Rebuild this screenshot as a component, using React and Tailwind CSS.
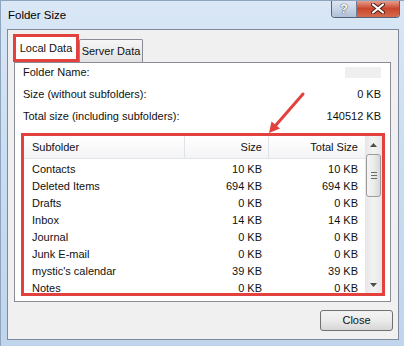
import React from "react";

const rows = [
  ["Contacts", "10 KB", "10 KB"],
  ["Deleted Items", "694 KB", "694 KB"],
  ["Drafts", "0 KB", "0 KB"],
  ["Inbox", "14 KB", "14 KB"],
  ["Journal", "0 KB", "0 KB"],
  ["Junk E-mail", "0 KB", "0 KB"],
  ["mystic's calendar", "39 KB", "39 KB"],
  ["Notes", "0 KB", "0 KB"],
];

function Triangle({ down }) {
  return (
    <svg width="7" height="4" viewBox="0 0 7 4">
      {down ? (
        <path d="M0 0 L7 0 L3.5 4 Z" fill="#4d4d4d" />
      ) : (
        <path d="M0 4 L7 4 L3.5 0 Z" fill="#4d4d4d" />
      )}
    </svg>
  );
}

function TitleButtons() {
  return (
    <div className="flex h-[18px] mr-[4px] -mt-[1px] rounded-b-[4px] border border-t-0 border-[#52637a] overflow-hidden">
      <div className="w-[25px] flex items-center justify-center bg-gradient-to-b from-[#dfe7f1] via-[#c9d6e7] to-[#aebfd5] border-r border-[#6e7f96]">
        <span className="text-white font-bold text-[13px] leading-none [text-shadow:0_0_1px_#2c3a4c,0_0_1px_#2c3a4c]">?</span>
      </div>
      <div className="w-[42px] flex items-center justify-center bg-gradient-to-b from-[#e9a899] via-[#c9462d] to-[#d56a4c]">
        <svg width="14" height="11" viewBox="0 0 14 11">
          <path d="M2 1.5 L12 9.5 M12 1.5 L2 9.5" stroke="#4a1f17" strokeWidth="4" strokeLinecap="round" />
          <path d="M2 1.5 L12 9.5 M12 1.5 L2 9.5" stroke="#ffffff" strokeWidth="2.2" strokeLinecap="round" />
        </svg>
      </div>
    </div>
  );
}

export default function App() {
  return (
    <div className="relative w-[404px] h-[346px] overflow-hidden bg-gradient-to-b from-[#d9e7f6] via-[#c9dcf0] to-[#c0d5ec] border-t border-l border-[#8fa4bd] font-['Liberation_Sans',Arial,sans-serif] text-[11px] text-[#111]">
      <div className="flex h-[28px] items-start justify-between">
        <div className="pl-[7px] pt-[5px] text-[11.5px] leading-[18px] text-black">Folder Size</div>
        <TitleButtons />
      </div>

      <div className="ml-[6px] w-[392px] h-[311px] border border-[#7d8a9b] bg-[#f0f0f0] flex flex-col">
        <div className="flex items-end ml-[5px] mt-[4px] h-[28px]">
          <div className="w-[66px] h-[28px] border-[3px] border-[#e2413e] bg-white flex items-center justify-center whitespace-nowrap">
            Local Data
          </div>
          <div className="w-[64px] h-[23px] border border-b-0 border-[#898c95] rounded-t-[2px] bg-gradient-to-b from-[#f6f6f6] to-[#e2e2e2] flex items-center justify-center whitespace-nowrap">
            Server Data
          </div>
        </div>

        <div className="ml-[6px] w-[377px] h-[240px] border border-[#898c95] bg-white pl-[6px] pr-[5px] pt-[1px] flex flex-col">
          <div className="flex flex-col gap-[5px]">
            <div className="h-[17px] flex items-center justify-between pl-[2px] pr-[4px]">
              <span>Folder Name:</span>
              <span className="w-[36px] h-[11px] bg-[#efefef]"></span>
            </div>
            <div className="h-[17px] flex items-center justify-between pl-[2px] pr-[4px]">
              <span>Size (without subfolders):</span>
              <span>0 KB</span>
            </div>
            <div className="h-[17px] flex items-center justify-between pl-[2px] pr-[4px]">
              <span>Total size (including subfolders):</span>
              <span>140512 KB</span>
            </div>
          </div>

          <div className="mt-[8px] w-[364px] h-[163px] border-[3px] border-[#e2413e] flex">
            <div className="flex-1 flex flex-col overflow-hidden">
              <div className="h-[23px] shrink-0 flex border-b border-[#e5e5e5] bg-gradient-to-b from-white to-[#f3f4f6]">
                <div className="w-[160px] pl-[8px] flex items-center">Subfolder</div>
                <div className="w-[84px] pr-[6px] flex items-center justify-end border-l border-[#dfe2e6]">Size</div>
                <div className="w-[97px] pr-[7px] flex items-center justify-end border-l border-[#dfe2e6]">Total Size</div>
              </div>
              <div className="pt-[2px] flex flex-col">
                {rows.map(([name, size, total]) => (
                  <div key={name} className="h-[17px] shrink-0 flex items-center leading-none">
                    <div className="w-[160px] pl-[8px]">{name}</div>
                    <div className="w-[84px] pr-[6px] text-right">{size}</div>
                    <div className="w-[97px] pr-[7px] text-right">{total}</div>
                  </div>
                ))}
              </div>
            </div>

            <div className="w-[17px] flex flex-col bg-gradient-to-r from-[#e6e6e6] via-[#f3f3f3] to-[#e6e6e6]">
              <div className="h-[17px] flex items-center justify-center">
                <Triangle />
              </div>
              <div className="mt-[1px] mx-[1px] h-[43px] rounded-[3px] border border-[#9b9b9b] bg-gradient-to-r from-[#f4f4f4] via-[#ececec] to-[#d8d8d8] flex flex-col items-center justify-center gap-[2px]">
                <div className="w-[6px] h-[1px] bg-[#6a6a6a]"></div>
                <div className="w-[6px] h-[1px] bg-[#6a6a6a]"></div>
                <div className="w-[6px] h-[1px] bg-[#6a6a6a]"></div>
              </div>
              <div className="flex-1"></div>
              <div className="h-[17px] flex items-center justify-center">
                <Triangle down />
              </div>
            </div>
          </div>
        </div>

        <div className="flex justify-end mt-[8px] pr-[5px]">
          <div className="w-[73px] h-[21px] rounded-[3px] border border-[#707070] bg-gradient-to-b from-[#f3f3f3] via-[#ebebeb] to-[#d6d6d6] flex items-center justify-center">
            Close
          </div>
        </div>
      </div>

      <svg className="absolute left-0 top-0 pointer-events-none" width="404" height="346" viewBox="0 0 404 346">
        <line x1="302" y1="93" x2="275" y2="124" stroke="#e2413e" strokeWidth="3" strokeLinecap="round" />
        <polygon points="268,132 279,127.5 270.5,120.5" fill="#e2413e" />
      </svg>
    </div>
  );
}
